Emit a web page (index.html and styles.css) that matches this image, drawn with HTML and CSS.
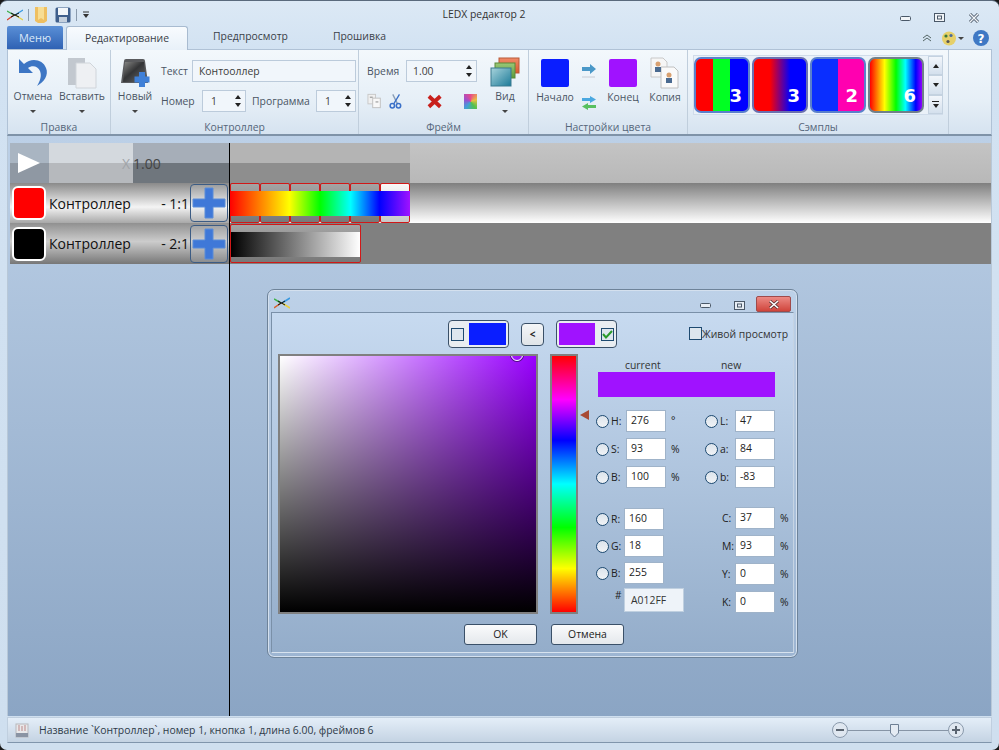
FILE: index.html
```html
<!DOCTYPE html>
<html lang="ru">
<head>
  <meta charset="UTF-8">
  <title>LEDX редактор 2</title>
  <link rel="stylesheet" href="styles.css">
</head>
<body>

<div class="window">
  <!-- title bar -->
  <div class="titlebar">
    <div class="qat">
      <svg class="app-icon" width="16" height="12" viewBox="0 0 16 12"><path d="M0 11 L7 6" stroke="#d8402a" stroke-width="1.3"/><path d="M0 2 L7 6" stroke="#3db04a" stroke-width="1.3"/><path d="M16 1 L8 6" stroke="#3a9ae0" stroke-width="1.3"/><path d="M16 11 L8 6" stroke="#e8d040" stroke-width="1.3"/><path d="M4 4 L12 8 M4 8 L12 4" stroke="#111" stroke-width="1"/></svg>
      <span class="qat-sep"></span>
      <svg width="14" height="18" viewBox="0 0 14 18"><path d="M1 1 H13 V15 L10 17 H4 L1 15 Z" fill="#eebf62"/><path d="M4 1 H10 V14 L7 12 L4 14 Z" fill="#f7dd94"/></svg>
      <svg class="save" width="16" height="16" viewBox="0 0 16 16"><rect x="0.5" y="0.5" width="15" height="15" rx="1.5" fill="#3f5f8c"/><rect x="3" y="1" width="10" height="7" fill="#f2f6fa"/><rect x="4" y="10" width="8" height="5" fill="#c4d0de"/></svg>
      <span class="qat-sep"></span>
      <svg width="8" height="8" viewBox="0 0 8 8"><path d="M1 1 H7" stroke="#333"/><path d="M1 3 H7 L4 7 Z" fill="#333"/></svg>
    </div>
    <div class="title">LEDX редактор 2</div>
    <div class="win-btns">
      <svg width="12" height="8" viewBox="0 0 12 8"><rect x="0.5" y="2.5" width="10" height="4" rx="1" fill="#f2f5f8" stroke="#4a5868"/></svg>
      <svg width="12" height="10" viewBox="0 0 12 10"><rect x="0.5" y="0.5" width="10" height="8" fill="#f2f5f8" stroke="#4a5868"/><rect x="3.5" y="3" width="4" height="3" fill="none" stroke="#4a5868"/></svg>
      <svg width="12" height="10" viewBox="0 0 12 10"><path d="M2 1 L10 9 M10 1 L2 9" stroke="#4a5868" stroke-width="3"/><path d="M2 1 L10 9 M10 1 L2 9" stroke="#f2f5f8" stroke-width="1.4"/></svg>
    </div>
  </div>

  <!-- tabs -->
  <div class="tabs">
    <div class="tab-menu">Меню</div>
    <div class="tab tab-active">Редактирование</div>
    <div class="tab tab-second">Предпросмотр</div>
    <div class="tab tab-third">Прошивка</div>
    <div class="tab-tools">
      <svg width="10" height="8" viewBox="0 0 10 8"><path d="M1 4 L5 1 L9 4 M1 7 L5 4 L9 7" fill="none" stroke="#566" stroke-width="1"/></svg>
      <svg class="tool-face" width="14" height="15" viewBox="0 0 14 15"><circle cx="7" cy="7.500" r="7" fill="#e6d06a"/><circle cx="4" cy="5" r="1.600" fill="#3a7a3a"/><circle cx="9" cy="4.500" r="1.600" fill="#4a6a9a"/><circle cx="6" cy="10.500" r="1.600" fill="#555"/></svg>
      <span class="tiny-arrow tools-arrow"></span>
      <svg class="help" width="16" height="16" viewBox="0 0 16 16"><circle cx="8" cy="8" r="8" fill="#3f78c4"/><text x="8" y="12.500" text-anchor="middle" class="help-q">?</text></svg>
    </div>
  </div>

  <!-- ribbon -->
  <div class="ribbon">
    <div class="group g-edit">
      <div class="group-body">
        <div class="big-btn w-46">
          <svg width="32" height="30" viewBox="0 0 32 30"><path d="M2 1 V15 H16 L11 10 C15 7 21 8 23 13 C25 18 23 23 20 28 C27 24 32 17 29 10 C26 2 15 -1 7 6 Z" fill="#3d76c4"/></svg>
          <span>Отмена</span>
          <span class="tiny-arrow"></span>
        </div>
        <div class="big-btn w-48">
          <svg width="30" height="32" viewBox="0 0 30 32"><rect x="1" y="1" width="17" height="27" fill="#c2c8cf"/><path d="M9 6 H23 L29 12 V31 H9 Z" fill="#eef0f3" stroke="#d0d5da"/></svg>
          <span>Вставить</span>
          <span class="tiny-arrow"></span>
        </div>
      </div>
      <div class="group-label">Правка</div>
    </div>

    <div class="group g-ctrl">
      <div class="group-body">
        <div class="big-btn w-38">
          <svg width="32" height="32" viewBox="0 0 32 32"><defs><linearGradient id="newBody" x1="0" y1="0" x2="1" y2="1"><stop offset="0" stop-color="#8a8a88"/><stop offset="0.45" stop-color="#333436"/><stop offset="1" stop-color="#6a6c70"/></linearGradient></defs><path d="M5 4 Q5 2 7 2 H24 Q26 2 26 4 L29 26 H2 Z" fill="#5a5b5e"/><path d="M6 5 H25 L27 25 H4 Z" fill="url(#newBody)"/><rect x="20" y="15" width="6" height="15" fill="#3f80d8"/><rect x="15.500" y="19.500" width="15" height="6" fill="#3f80d8"/></svg>
          <span>Новый</span>
          <span class="tiny-arrow"></span>
        </div>
        <div class="ctrl-fields">
          <div class="field-row">
            <span class="f-label f-text">Текст</span>
            <div class="r-input r-wide">Контооллер</div>
          </div>
          <div class="field-row">
            <span class="f-label f-num">Номер</span>
            <div class="r-input r-spin r-44">1<span class="spin"><i class="up"></i><i class="down"></i></span></div>
            <span class="f-label f-prog">Программа</span>
            <div class="r-input r-spin r-40">1<span class="spin"><i class="up"></i><i class="down"></i></span></div>
          </div>
        </div>
      </div>
      <div class="group-label">Контроллер</div>
    </div>

    <div class="group g-frame">
      <div class="group-body">
        <div class="frame-fields">
          <div class="field-row">
            <span class="f-label f-time">Время</span>
            <div class="r-input r-spin r-71">1.00<span class="spin"><i class="up"></i><i class="down"></i></span></div>
          </div>
          <div class="frame-icons">
            <svg width="16" height="16" viewBox="0 0 16 16"><rect x="1" y="1" width="8" height="10" fill="#f0f0f0" stroke="#c8c8c8"/><rect x="6" y="5" width="8" height="10" fill="#f8f8f8" stroke="#c0c0c0"/><path d="M3 4 H6 M9 9 H12" stroke="#888"/></svg>
            <svg class="ic-cut" width="14" height="16" viewBox="0 0 14 16"><path d="M4 1 L9 11" stroke="#8a9db5" stroke-width="1.400"/><path d="M11 1 L5 11" stroke="#3a70c8" stroke-width="1.400"/><circle cx="3.500" cy="13" r="2.300" fill="none" stroke="#3a70c8" stroke-width="1.600"/><circle cx="10" cy="13" r="2.300" fill="none" stroke="#3a70c8" stroke-width="1.600"/></svg>
            <svg class="ic-del" width="16" height="15" viewBox="0 0 16 15"><path d="M2 2 L14 13 M14 2 L2 13" stroke="#c8201c" stroke-width="4"/></svg>
            <div class="ic-color"></div>
          </div>
        </div>
        <div class="big-btn w-30 vid">
          <svg width="30" height="32" viewBox="0 0 30 32"><defs><linearGradient id="layerRed" x1="0" y1="0" x2="0" y2="1"><stop offset="0" stop-color="#f08a68"/><stop offset="1" stop-color="#d85a30"/></linearGradient><linearGradient id="layerGreen" x1="0" y1="0" x2="0" y2="1"><stop offset="0" stop-color="#9ac878"/><stop offset="1" stop-color="#5a9a3a"/></linearGradient><linearGradient id="layerTeal" x1="0" y1="0" x2="1" y2="1"><stop offset="0" stop-color="#a8d4dc"/><stop offset="1" stop-color="#1c7a98"/></linearGradient></defs><rect x="9" y="1" width="20" height="15" fill="url(#layerRed)" stroke="#b85a38"/><rect x="5" y="6" width="20" height="15" fill="url(#layerGreen)" stroke="#5a8a3a"/><rect x="1" y="11" width="20" height="18" fill="url(#layerTeal)" stroke="#3a7a90"/></svg>
          <span>Вид</span>
          <span class="tiny-arrow"></span>
        </div>
      </div>
      <div class="group-label">Фрейм</div>
    </div>

    <div class="group g-color">
      <div class="group-body">
        <div class="color-col">
          <div class="rib-swatch sw-blue"></div>
          <span>Начало</span>
        </div>
        <div class="arrows-col">
          <svg width="16" height="14" viewBox="0 0 16 14"><path d="M1 3 H9 V0 L15 5 L9 10 V7 H1 Z" fill="#4a98c8"/><path d="M1 13 H14" stroke="#c8ccd4"/></svg>
          <svg width="16" height="14" viewBox="0 0 16 14"><path d="M1 2 H9 V0 L15 3.500 L9 7 V5 H1 Z" fill="#4aa8e0"/><path d="M15 9 H7 V7 L1 10.500 L7 14 V12 H15 Z" fill="#58c060"/></svg>
        </div>
        <div class="color-col col-end">
          <div class="rib-swatch sw-purple"></div>
          <span>Конец</span>
        </div>
        <div class="color-col col-copy">
          <svg width="30" height="32" viewBox="0 0 30 32"><path d="M1 1 H13 L17 5 V20 H1 Z" fill="#f6f6f6" stroke="#c8c8c8"/><path d="M11 10 H24 L28 14 V31 H11 Z" fill="#fafafa" stroke="#c0c0c0"/><circle cx="8" cy="7" r="2.500" fill="#d8a070"/><rect x="5" y="10" width="6" height="5" fill="#4a6a90"/><circle cx="19" cy="18" r="2.500" fill="#d8a070"/><rect x="16" y="21" width="6" height="5" fill="#4a6a90"/></svg>
          <span>Копия</span>
        </div>
      </div>
      <div class="group-label">Настройки цвета</div>
    </div>

    <div class="group g-samples">
      <div class="group-body">
        <div class="gallery">
          <div class="sample s-rgb">3</div>
          <div class="sample s-redblue">3</div>
          <div class="sample s-bluepink">2</div>
          <div class="sample s-rainbow">6</div>
          <div class="gallery-scroll">
            <div class="gs-btn"><i class="up"></i></div>
            <div class="gs-btn"><i class="down"></i></div>
            <div class="gs-btn gs-more"><i class="down"></i></div>
          </div>
        </div>
      </div>
      <div class="group-label">Сэмплы</div>
    </div>
  </div>

  <!-- timeline -->
  <div class="content">
    <div class="playhead"></div>
    <div class="tl-head">
      <div class="play"><svg width="22" height="20" viewBox="0 0 22 20"><path d="M0 0 L22 10 L0 20 Z" fill="#fff"/></svg></div>
      <div class="speed-light"><span class="x">X</span></div>
      <div class="speed-dark"><span>1.00</span></div>
      <div class="ruler"></div>
      <div class="ruler-rest"></div>
    </div>

    <div class="tl-row row-one">
      <div class="row-left left-one">
        <div class="ctl-swatch red"></div>
        <span class="ctl-name">Контроллер</span>
        <span class="ctl-id">- 1:1</span>
        <div class="plus-btn"><svg width="34" height="32" viewBox="0 0 34 32"><path d="M13 1 H21 V12 H33 V20 H21 V31 H13 V20 H1 V12 H13 Z" fill="#3f78d8" stroke="#5a8cd8"/></svg></div>
      </div>
      <div class="track-one">
        <div class="frames">
          <i></i><i></i><i></i><i></i><i></i><i class="frame-last"></i>
        </div>
        <div class="rainbow-bar"></div>
      </div>
    </div>

    <div class="tl-row row-two">
      <div class="row-left left-two">
        <div class="ctl-swatch black"></div>
        <span class="ctl-name">Контроллер</span>
        <span class="ctl-id">- 2:1</span>
        <div class="plus-btn"><svg width="34" height="32" viewBox="0 0 34 32"><path d="M13 1 H21 V12 H33 V20 H21 V31 H13 V20 H1 V12 H13 Z" fill="#3f78d8" stroke="#5a8cd8"/></svg></div>
      </div>
      <div class="track-two">
        <div class="long-frame"><div class="grey-bar"></div></div>
      </div>
    </div>

    <!-- colour picker window -->
    <div class="dialog">
      <div class="dlg-caption">
        <svg class="dlg-icon" width="16" height="12" viewBox="0 0 16 12"><path d="M0 11 L7 6" stroke="#d8602a" stroke-width="1.500"/><path d="M0 2 L7 6" stroke="#3db04a" stroke-width="1.500"/><path d="M16 1 L8 6" stroke="#3a9ae0" stroke-width="1.500"/><path d="M16 11 L8 6" stroke="#e8d040" stroke-width="1.500"/><path d="M4 4 L11 8 M4 8 L11 4" stroke="#111"/></svg>
        <div class="dlg-btns">
          <svg class="dlg-min" width="12" height="6" viewBox="0 0 12 6"><rect x="0.500" y="0.500" width="10" height="4" rx="1" fill="#e8eef5" stroke="#4a5868"/></svg>
          <svg class="dlg-max" width="11" height="9" viewBox="0 0 11 9"><rect x="0.500" y="0.500" width="10" height="8" fill="#e8eef5" stroke="#4a5868"/><rect x="3.500" y="3" width="4" height="3" fill="none" stroke="#4a5868"/></svg>
          <div class="dlg-close"><svg width="12" height="9" viewBox="0 0 12 9"><path d="M2 1 L10 8 M10 1 L2 8" stroke="#5a3030" stroke-width="3"/><path d="M2 1 L10 8 M10 1 L2 8" stroke="#fff" stroke-width="1.600"/></svg></div>
        </div>
      </div>
      <div class="dlg-inner">
        <div class="dlg-top">
          <div class="pick-box">
            <span class="chk"></span>
            <div class="pick-color sw-blue2"></div>
          </div>
          <div class="swap-btn">&lt;</div>
          <div class="pick-box">
            <div class="pick-color sw-purple2"></div>
            <span class="chk chk-on"><svg width="11" height="9" viewBox="0 0 11 9"><path d="M1 4 L4 7.500 L10 1" fill="none" stroke="#2a9a2a" stroke-width="2"/></svg></span>
          </div>
          <label class="live"><span class="chk chk-live"></span>Живой просмотр</label>
        </div>

        <div class="dlg-main">
          <div class="sv-square"><div class="sv-dot"></div></div>
          <div class="hue-wrap">
            <div class="hue-bar"></div>
            <div class="hue-mark"></div>
          </div>
          <div class="values">
            <div class="cur-new"><span class="lbl-current">current</span><span class="lbl-new">new</span></div>
            <div class="cur-bar"></div>

            <div class="val-grid">
              <div class="v-row"><span class="radio"></span><span class="v-name">H:</span><span class="v-input">276</span><span class="v-unit deg">°</span></div>
              <div class="v-row"><span class="radio"></span><span class="v-name">L:</span><span class="v-input">47</span></div>
              <div class="v-row"><span class="radio"></span><span class="v-name">S:</span><span class="v-input">93</span><span class="v-unit">%</span></div>
              <div class="v-row"><span class="radio"></span><span class="v-name">a:</span><span class="v-input">84</span></div>
              <div class="v-row"><span class="radio"></span><span class="v-name">B:</span><span class="v-input">100</span><span class="v-unit">%</span></div>
              <div class="v-row"><span class="radio"></span><span class="v-name">b:</span><span class="v-input">-83</span></div>
            </div>

            <div class="low-cols">
              <div class="rgb-col">
                <div class="v-row"><span class="radio"></span><span class="v-name narrow">R:</span><span class="v-input">160</span></div>
                <div class="v-row"><span class="radio"></span><span class="v-name narrow">G:</span><span class="v-input">18</span></div>
                <div class="v-row"><span class="radio"></span><span class="v-name narrow">B:</span><span class="v-input">255</span></div>
                <div class="hex-row"><span class="hash">#</span><span class="hex-input">A012FF</span></div>
              </div>
              <div class="cmyk-col">
                <div class="v-row"><span class="c-name">C:</span><span class="v-input">37</span><span class="v-unit">%</span></div>
                <div class="v-row"><span class="c-name">M:</span><span class="v-input">93</span><span class="v-unit">%</span></div>
                <div class="v-row"><span class="c-name">Y:</span><span class="v-input">0</span><span class="v-unit">%</span></div>
                <div class="v-row"><span class="c-name">K:</span><span class="v-input">0</span><span class="v-unit">%</span></div>
              </div>
            </div>
          </div>
        </div>

        <div class="dlg-buttons">
          <div class="dlg-btn">OK</div>
          <div class="dlg-btn">Отмена</div>
        </div>
      </div>
    </div>
  </div>

  <!-- status bar -->
  <div class="statusbar">
    <svg width="14" height="15" viewBox="0 0 14 15"><rect x="1" y="1" width="12" height="13" fill="#e8e8ea" stroke="#b8b8bc"/><path d="M4 2 V8 M7 3 V8 M10 2 V8" stroke="#b88"/><rect x="1" y="10" width="12" height="4" fill="#8a94a4"/></svg>
    <span class="status-text">Название `Контроллер`, номер 1, кнопка 1, длина 6.00, фреймов 6</span>
    <div class="zoom">
      <div class="zoom-btn"><b class="zh"></b></div>
      <div class="zoom-track"><div class="zoom-thumb"><svg width="9" height="14" viewBox="0 0 9 14"><path d="M0.500 0.500 H8.500 V9 L4.500 13 L0.500 9 Z" fill="#e4ebf3" stroke="#6d7f94"/></svg></div></div>
      <div class="zoom-btn"><b class="zh"></b><b class="zv"></b></div>
    </div>
  </div>
</div>

</body>
</html>
```

FILE: styles.css
```css
* {
  box-sizing: border-box;
}
html, body {
  margin: 0;
  padding: 0;
}
body {
  width: 999px;
  height: 750px;
  overflow: hidden;
  font-family: "Open Sans", "Noto Sans", sans-serif;
  font-size: 10.4px;
  background-color: #1a1a1a;
}
.window {
  width: 999px;
  height: 750px;
  display: flex;
  flex-direction: column;
  padding: 0 7px 7px;
  border-top: 1px solid #5a6a7c;
  border-radius: 7px;
  background: linear-gradient(to bottom, #dce9f5 0, #d2e2f2 50px, #cfdfef 100%);
}

/* title bar */
.titlebar {
  height: 24px;
  display: flex;
  align-items: center;
  position: relative;
  flex: none;
}
.qat {
  display: flex;
  align-items: center;
  gap: 5px;
  width: 200px;
  margin-top: 3px;
}
.qat-sep {
  width: 1px;
  height: 12px;
  background-color: #8a9aac;
}
.save {
  margin-left: 2px;
}
.title {
  flex: 1;
  text-align: center;
  padding-right: 136px;
  color: #333;
  margin-top: 2px;
}
.win-btns {
  width: 95px;
  display: flex;
  gap: 22px;
  align-items: center;
  margin-top: 9px;
  padding-left: 3px;
}

/* tabs */
.tabs {
  height: 24px;
  display: flex;
  flex: none;
  align-items: flex-end;
  color: #3a3f48;
}
.tab-menu {
  width: 56px;
  height: 23px;
  background: linear-gradient(to bottom, #5a8fd6, #2f62b4);
  color: #dce9f8;
  text-align: center;
  line-height: 24px;
  border-radius: 2px 2px 0 0;
  font-size: 11px;
}
.tab {
  line-height: 23px;
  height: 24px;
}
.tab-active {
  width: 122px;
  margin-left: 3px;
  text-align: center;
  border: 1px solid #a8bbd0;
  border-bottom: none;
  border-radius: 3px 3px 0 0;
  background: linear-gradient(to bottom, #f8fbfe, #e8f1f9);
  position: relative;
  top: 1px;
}
.tab-second {
  margin-left: 25px;
}
.tab-third {
  margin-left: 45px;
}
.tab-tools {
  margin-left: auto;
  display: flex;
  align-items: center;
  height: 22px;
  padding-right: 3px;
}
.tool-face {
  margin-left: 10px;
}
.tools-arrow {
  margin: 0 9px 0 2px;
}

/* ribbon */
.ribbon {
  height: 87px;
  flex: none;
  display: flex;
  border: 1px solid #b0c2d6;
  border-bottom: 2px solid #7f93a8;
  background: linear-gradient(to bottom, #f3f8fc 0, #e6eff7 60%, #d6e3f0 100%);
  color: #4a5564;
}
.group {
  display: flex;
  flex-direction: column;
  border-right: 1px solid #c0cedc;
  flex: none;
}
.group-body {
  flex: 1;
  display: flex;
}
.group-label {
  height: 17px;
  text-align: center;
  line-height: 18px;
  padding-top: 1px;
  color: #55657a;
}
.g-edit { width: 103px; }
.g-edit .group-body { padding-left: 2px; }
.g-ctrl { width: 248px; }
.g-ctrl .group-body { padding-left: 5px; }
.g-frame { width: 170px; }
.g-frame .group-body { padding-left: 8px; }
.g-color { width: 159px; }
.g-color .group-body { padding-left: 6px; }
.g-samples { width: 261px; }

.big-btn {
  display: flex;
  flex-direction: column;
  align-items: center;
  padding-top: 7px;
  white-space: nowrap;
  line-height: 14px;
}
.big-btn svg {
  height: 32px;
  flex: none;
}
.w-46 { width: 46px; }
.w-48 { width: 48px; margin-left: 2px; }
.w-38 { width: 38px; }
.w-30 { width: 30px; margin-left: 13px; }
.tiny-arrow {
  display: block;
  width: 0;
  height: 0;
  margin-top: 7px;
  border: 3px solid transparent;
  border-top: 3px solid #444;
  border-bottom: none;
}
.tab-tools .tiny-arrow {
  margin-top: 0;
}

.ctrl-fields {
  margin-left: 7px;
  padding-top: 10px;
  display: flex;
  flex-direction: column;
  gap: 8px;
}
.field-row {
  display: flex;
  align-items: center;
  height: 22px;
}
.f-text { width: 31px; }
.f-num { width: 41px; }
.f-prog { margin: 0 6px; width: 58px; }
.f-time { width: 39px; }
.r-input {
  height: 22px;
  border: 1px solid #bccbdb;
  background-color: #f1f6fb;
  color: #3c3c3c;
  line-height: 20px;
  padding-left: 6px;
  position: relative;
}
.r-wide { width: 164px; }
.r-44 { width: 44px; padding-left: 8px; }
.r-40 { width: 40px; padding-left: 8px; }
.r-71 { width: 71px; }
.spin {
  position: absolute;
  right: 4px;
  top: 4px;
  display: flex;
  flex-direction: column;
  gap: 4px;
}
.up, .down {
  display: block;
  width: 0;
  height: 0;
  border: 3px solid transparent;
  border-top: none;
  border-bottom: 4px solid #222;
}
.down {
  border-bottom: none;
  border-top: 4px solid #222;
}
.frame-fields {
  padding-top: 10px;
  display: flex;
  flex-direction: column;
  width: 110px;
}
.frame-icons {
  display: flex;
  align-items: center;
  margin-top: 11px;
}
.ic-cut { margin-left: 7px; }
.ic-del { margin-left: 24px; }
.ic-color {
  width: 14px;
  height: 15px;
  margin-left: 22px;
  background: conic-gradient(#e84a8a, #e8c040, #50c050, #40a0d8, #9a50d0, #e84a8a);
}
.color-col {
  width: 40px;
  display: flex;
  flex-direction: column;
  align-items: center;
  padding-top: 9px;
  line-height: 14px;
}
.color-col span {
  margin-top: 3px;
}
.rib-swatch {
  width: 28px;
  height: 28px;
  border-radius: 2px;
}
.sw-blue { background-color: #0a1eff; }
.sw-purple { background-color: #a012ff; }
.arrows-col {
  width: 16px;
  margin-left: 6px;
  padding-top: 14px;
  display: flex;
  flex-direction: column;
  gap: 18px;
}
.col-end { margin-left: 6px; }
.col-copy { margin-left: 2px; padding-top: 7px; }
.col-copy span { margin-top: 1px; }

.gallery {
  margin: 5px 0 0 5px;
  width: 250px;
  height: 60px;
  display: flex;
  align-items: center;
  gap: 2px;
  background-color: #eaf1f8;
  border: 1px solid #d0dcea;
  border-right: none;
}
.sample {
  width: 56px;
  height: 56px;
  flex: none;
  border: 2px solid #5a80cc;
  border-radius: 7px;
  color: #fff;
  font-family: "DejaVu Sans", sans-serif;
  font-weight: bold;
  font-size: 18px;
  text-align: right;
  padding: 24px 6px 0 0;
  line-height: 26px;
}
.s-rgb {
  background: linear-gradient(to right, #f00 0 33%, #0f2 33% 66%, #00f 66%);
}
.s-redblue {
  background: linear-gradient(to right, #f00 0 30%, #00f 70%);
  border-color: #6a70b0;
}
.s-bluepink {
  background: linear-gradient(to right, #0a2eff 0 50%, #ff00b0 50%);
}
.s-rainbow {
  background: linear-gradient(to right, #f00, #ff0 28%, #0f0 50%, #0ff 68%, #00f 88%, #9000ff);
  border-color: #70808a;
}
.gallery-scroll {
  width: 15px;
  flex: none;
  margin-left: 2px;
  height: 58px;
  display: flex;
  flex-direction: column;
}
.gs-btn {
  flex: 1;
  display: flex;
  flex-direction: column;
  align-items: center;
  justify-content: center;
  border: 1px solid #c4d2e0;
  background: linear-gradient(to bottom, #f2f6fb, #d4e0ed);
}
.gs-more {
  gap: 2px;
}
.gs-more::before {
  content: "";
  width: 7px;
  height: 1px;
  background-color: #222;
}

/* timeline */
.content {
  flex: 1;
  position: relative;
  padding: 7px 0 0 2px;
  background: linear-gradient(to bottom, #bcd0e7 0, #8ba5c4 100%);
  border-left: 1px solid #b8c8d8;
  border-right: 1px solid #b8c8d8;
}
.playhead {
  position: absolute;
  left: 221px;
  top: 7px;
  bottom: 0;
  width: 1px;
  background-color: #000;
  z-index: 2;
}
.tl-head {
  height: 40px;
  display: flex;
  width: 981px;
}
.play {
  width: 39px;
  padding: 10px 0 0 8px;
  background: linear-gradient(to bottom, #a9b5c2 0 50%, #8f98a3 50%);
}
.speed-light {
  width: 84px;
  background: linear-gradient(to bottom, #d4d9de 0 50%, #b6b9bd 50%);
  color: #a0a4a8;
  font-size: 14px;
  text-align: right;
  line-height: 41px;
  padding-right: 3px;
}
.speed-dark {
  width: 96px;
  background: linear-gradient(to bottom, #a6aeb8 0 50%, #6f767d 50%);
  color: #444;
  font-size: 14px;
  line-height: 41px;
}
.ruler {
  width: 181px;
  background: linear-gradient(to bottom, #b4b4b4 0 50%, #8e8e8e 50%);
}
.ruler-rest {
  flex: 1;
  background: linear-gradient(to bottom, #c4c4c4, #b8b8b8);
}
.tl-row {
  display: flex;
  width: 981px;
}
.row-one {
  height: 40px;
  background: linear-gradient(to bottom, #7f7f7f, #fff);
}
.row-two {
  height: 41px;
  background-color: #808080;
}
.row-left {
  width: 219px;
  flex: none;
  display: flex;
  align-items: center;
  padding-left: 2px;
  color: #111;
}
.left-one {
  background: linear-gradient(to bottom, #8a8a8a, #f4f4f4 60%, #a8a8a8);
}
.left-two {
  background: linear-gradient(to bottom, #909090, #cccccc 45%, #777);
}
.ctl-swatch {
  width: 34px;
  height: 34px;
  border: 2px solid #fff;
  border-radius: 6px;
  flex: none;
}
.red { background-color: #f00; }
.black { background-color: #000; }
.ctl-name {
  margin-left: 3px;
  font-size: 14px;
  width: 110px;
  flex: none;
}
.ctl-id {
  font-size: 14px;
  white-space: nowrap;
  text-align: right;
  flex: 1;
}
.plus-btn {
  width: 38px;
  height: 38px;
  margin: 0 1px;
  border: 1px solid #3c5c84;
  border-radius: 4px;
  display: flex;
  align-items: center;
  justify-content: center;
  background-color: rgba(220, 228, 238, 0.15);
  flex: none;
}
.track-one {
  width: 180px;
  margin-left: 1px;
  position: relative;
}
.frames {
  display: flex;
  height: 40px;
}
.frames i {
  flex: 1;
  border: 1px solid #d01818;
  border-radius: 2px;
  background: linear-gradient(to bottom, #a4a4a4, #787878);
}
.frames .frame-last {
  background: linear-gradient(to bottom, #f8f8f8, #c8c8c8);
}
.rainbow-bar {
  position: absolute;
  left: 0;
  right: 0;
  top: 8px;
  height: 25px;
  background: linear-gradient(to right, #f00, #ff0 33%, #0f0 50%, #0ff 67%, #00f 83%, #a012ff);
}
.track-two {
  margin-left: 1px;
}
.long-frame {
  width: 131px;
  height: 39px;
  border: 1px solid #d01818;
  border-radius: 2px;
  margin-top: 1px;
  padding-top: 7px;
  background: linear-gradient(to bottom, #a4a4a4, #787878);
}
.grey-bar {
  height: 25px;
  background: linear-gradient(to right, #000, #fff);
}

/* colour picker window */
.dialog {
  position: absolute;
  left: 259px;
  top: 153px;
  width: 531px;
  height: 369px;
  border: 1px solid #6e8399;
  border-radius: 7px;
  padding: 0 3px 3px;
  background: linear-gradient(to bottom, #bdd1e8, #9db5d2);
  box-shadow: inset 0 0 0 1px #d4e0ee;
  z-index: 3;
}
.dlg-caption {
  height: 22px;
  display: flex;
  padding-left: 3px;
}
.dlg-icon {
  margin-top: 7px;
}
.dlg-btns {
  margin-left: auto;
  display: flex;
  align-items: flex-start;
  padding-top: 6px;
  padding-right: 3px;
}
.dlg-min {
  margin-top: 7px;
}
.dlg-max {
  margin-left: 22px;
  margin-top: 5px;
}
.dlg-close {
  width: 35px;
  height: 16px;
  margin-left: 11px;
  background: linear-gradient(to bottom, #ec8a84, #d0453c);
  border: 1px solid #a04a4a;
  border-radius: 2px;
  display: flex;
  align-items: center;
  justify-content: center;
}
.dlg-inner {
  height: 341px;
  border: 1px solid #7a90a8;
  border-right: 1px solid #c6d4e4;
  border-bottom: 1px solid #d8e3ef;
  background: linear-gradient(to bottom, #c7daf0, #94adca);
  padding: 7px 0 0 6px;
  color: #222;
}
.dlg-top {
  height: 28px;
  display: flex;
  align-items: center;
  padding-left: 170px;
}
.pick-box {
  width: 61px;
  height: 28px;
  border: 1px solid #3a5068;
  border-radius: 4px;
  background-color: #e9edf1;
  display: flex;
  align-items: center;
  padding: 0 2px;
}
.chk {
  width: 13px;
  height: 13px;
  border: 1px solid #1e4a70;
  background-color: #dde6ee;
  flex: none;
  display: flex;
  align-items: center;
  justify-content: center;
}
.pick-color {
  width: 37px;
  height: 22px;
}
.sw-blue2 { background-color: #0a1eff; margin-left: 5px; }
.sw-purple2 { background-color: #a012ff; margin-right: 6px; }
.swap-btn {
  width: 23px;
  height: 23px;
  margin: 0 12px;
  border: 1px solid #3a5068;
  border-radius: 4px;
  background: linear-gradient(to bottom, #f4f6f8, #e0e4e8);
  text-align: center;
  line-height: 21px;
  font-weight: bold;
  font-size: 10px;
}
.live {
  margin-left: 72px;
  display: flex;
  align-items: center;
  white-space: nowrap;
  margin-top: -1px;
  color: #333;
}
.dlg-main {
  display: flex;
  margin-top: 6px;
}
.sv-square {
  width: 260px;
  height: 260px;
  flex: none;
  border: 2px solid #808080;
  position: relative;
  overflow: hidden;
  background:
    linear-gradient(to bottom, rgba(0, 0, 0, 0), #000),
    linear-gradient(to right, #fff, #9900ff);
}
.sv-dot {
  position: absolute;
  left: 231px;
  top: -7px;
  width: 12px;
  height: 12px;
  border-radius: 50%;
  border: 1px solid #fff;
  box-shadow: 0 0 0 1px #501080;
}
.hue-wrap {
  width: 28px;
  height: 260px;
  flex: none;
  margin-left: 12px;
  position: relative;
}
.hue-bar {
  height: 260px;
  border: 2px solid #808080;
  background: linear-gradient(to bottom, #f00, #f0f 17%, #00f 33%, #0ff 50%, #0f0 67%, #ff0 83%, #f00);
}
.hue-mark {
  position: absolute;
  left: 30px;
  top: 56px;
  width: 0;
  height: 0;
  border: 5px solid transparent;
  border-left: none;
  border-right: 9px solid #a84a34;
}
.values {
  margin-left: 18px;
  width: 195px;
  flex: none;
}
.cur-new {
  height: 18px;
  line-height: 22px;
  display: flex;
  color: #333;
}
.lbl-current { margin-left: 29px; width: 96px; }
.cur-bar {
  width: 177px;
  height: 25px;
  margin-left: 2px;
  background-color: #a012ff;
}
.val-grid {
  margin-top: 13px;
  display: grid;
  grid-template-columns: 109px 86px;
  row-gap: 6px;
}
.v-row {
  display: flex;
  align-items: center;
  height: 22px;
}
.radio {
  width: 13px;
  height: 13px;
  border-radius: 50%;
  border: 1px solid #1e4a70;
  background: linear-gradient(to bottom, #dce4ec, #f0f3f6);
  flex: none;
}
.v-name {
  width: 17px;
  padding-left: 2px;
  flex: none;
}
.v-name.narrow {
  width: 15px;
}
.v-input {
  width: 40px;
  height: 22px;
  border: 1px solid #9fb3c9;
  background-color: #fff;
  line-height: 18px;
  padding-left: 4px;
  flex: none;
}
.v-unit {
  margin-left: 5px;
}
.deg {
  margin-top: -3px;
}
.low-cols {
  margin-top: 20px;
  display: flex;
}
.rgb-col {
  width: 109px;
  display: flex;
  flex-direction: column;
  gap: 5px;
}
.cmyk-col {
  display: flex;
  flex-direction: column;
  gap: 6px;
  margin-top: -1px;
}
.c-name {
  width: 13px;
  flex: none;
  margin-left: 17px;
  white-space: nowrap;
}
.hex-row {
  display: flex;
  height: 24px;
  margin-top: -1px;
}
.hash {
  margin-left: 19px;
  width: 9px;
  flex: none;
  font-size: 10px;
}
.hex-input {
  width: 60px;
  height: 24px;
  background-color: #eef3f9;
  border: 1px solid #c0d0e0;
  padding-left: 6px;
  line-height: 23px;
  color: #333;
}
.dlg-buttons {
  display: flex;
  margin: 10px 0 0 186px;
  gap: 14px;
}
.dlg-btn {
  width: 73px;
  height: 21px;
  border: 1px solid #3a5068;
  border-radius: 3px;
  background: linear-gradient(to bottom, #fafbfc, #e4e8ec);
  text-align: center;
  line-height: 19px;
  color: #222;
}

/* status bar */
.statusbar {
  height: 26px;
  flex: none;
  margin-top: 1px;
  display: flex;
  align-items: center;
  padding-left: 7px;
  border: 1px solid #c0cfdf;
  border-bottom: 1px solid #8095ac;
  background: linear-gradient(to bottom, #e4eef8, #c4d3e3);
  color: #2e3a48;
}
.status-text {
  margin-left: 10px;
}
.zoom {
  margin-left: auto;
  margin-right: 27px;
  display: flex;
  align-items: center;
}
.zoom-btn {
  width: 16px;
  height: 16px;
  border-radius: 50%;
  border: 1px solid #8a9aac;
  background-color: #dfe7f0;
  position: relative;
  flex: none;
}
.zh, .zv {
  position: absolute;
  background-color: #5a6470;
}
.zh {
  left: 3px;
  top: 6px;
  width: 8px;
  height: 2px;
}
.zv {
  left: 6px;
  top: 3px;
  width: 2px;
  height: 8px;
}
.zoom-track {
  width: 100px;
  height: 1px;
  background-color: #8795a6;
  position: relative;
}
.zoom-thumb {
  position: absolute;
  left: 42px;
  top: -6px;
}
.help-q {
  fill: #fff;
  font-family: "DejaVu Sans", sans-serif;
  font-weight: bold;
  font-size: 12px;
}
```
